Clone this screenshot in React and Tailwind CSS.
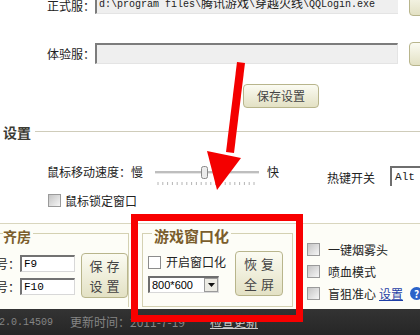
import React from 'react';

const Check = ({ flat }) => (
    <span
        className={`inline-block w-[13px] h-[13px] shrink-0 border ${flat ? 'border-[#8c8c8c] bg-white' : 'border-[#9a9a9a] bg-linear-to-br from-[#c4c4c4] to-[#f6f6f6]'}`}
    />
);

const CreamButton = ({ className, children }) => (
    <div
        className={`flex flex-col items-center justify-center shrink-0 rounded-[4px] border border-[#b8b58c] bg-linear-to-b from-[#fbfbf2] to-[#e3e1c4] text-[#444] ${className}`}
    >
        {children}
    </div>
);

const Slider = () => {
    const ticks = [];
    for (let i = 0; i < 21; i++) ticks.push(3 + i * 4.8);
    return (
        <svg width="104" height="22" className="shrink-0">
            <line x1="0" y1="8" x2="104" y2="8" stroke="#a9a9a9" strokeWidth="1.5" />
            <line x1="0" y1="9.5" x2="104" y2="9.5" stroke="#e6e6e6" strokeWidth="1" />
            <rect x="46.5" y="2.5" width="6" height="12" rx="2" fill="#ececec" stroke="#8a8a8a" />
            {ticks.map((x) => (
                <line key={x} x1={x} y1="18" x2={x} y2="21" stroke="#b4b4b4" strokeWidth="1" />
            ))}
        </svg>
    );
};

const App = () => {
    return (
        <div className="relative w-[420px] h-[335px] overflow-hidden bg-white text-[12px] text-[#222] font-['Noto_Sans_CJK_SC',sans-serif]">
            {/* path rows */}
            <div className="flex items-center h-[20px] -mt-[6px]">
                <span className="w-[95px] shrink-0 pl-[47px] leading-[16px] mt-[4px] whitespace-nowrap">正式服：</span>
                <div className="w-[303px] shrink-0 h-full flex items-end pb-[1px] pl-[2px] bg-[#efefef] border-l-2 border-l-[#7c7c7c] border-b border-b-[#e4e4e4] whitespace-nowrap overflow-hidden font-['Liberation_Mono','Noto_Sans_CJK_SC',monospace] leading-[14px]">
                    <span className="text-[10px]">d:\program files\</span>
                    <span className="text-[12px]">腾讯游戏</span>
                    <span className="text-[10px]">\</span>
                    <span className="text-[12px]">穿越火线</span>
                    <span className="text-[10px]">\QQLogin.exe</span>
                </div>
                <CreamButton className="ml-[11px] w-[30px] h-[26px] self-start -mt-[4px]" />
            </div>
            <div className="flex items-center h-[21px] mt-[29px]">
                <span className="w-[95px] shrink-0 pl-[47px] leading-[16px] whitespace-nowrap">体验服：</span>
                <div className="w-[303px] shrink-0 h-full bg-[#efefef] border-t-2 border-l-2 border-[#7c7c7c] border-b border-r border-r-[#e4e4e4] border-b-[#e4e4e4]" />
                <CreamButton className="ml-[11px] w-[30px] h-[24px]" />
            </div>
            <div className="flex h-[24px] mt-[20px] pl-[243px]">
                <CreamButton className="w-[76px] h-full text-[12px] text-[#333]">保存设置</CreamButton>
            </div>

            {/* settings header */}
            <div className="flex items-center h-[16px] mt-[16px]">
                <span className="ml-[3px] text-[14px] font-bold leading-[16px] text-[#3c3b33]">设置</span>
                <div className="flex-1 h-px ml-[4px] -mt-[2px] bg-[#cfccba]" />
            </div>

            {/* speed row */}
            <div className="flex h-[22px] mt-[24px]">
                <span className="ml-[47px] leading-[16px] whitespace-nowrap">鼠标移动速度：慢</span>
                <span className="ml-[12px]">
                    <Slider />
                </span>
                <span className="ml-[8px] leading-[16px]">快</span>
                <span className="ml-[48px] mt-[6px] leading-[16px] whitespace-nowrap">热键开关</span>
                <div className="ml-[15px] mt-[2px] w-[40px] h-[20px] shrink-0 pl-[3px] flex items-center bg-white border-t-2 border-l-2 border-[#6e6e6e] font-['Liberation_Mono',monospace] text-[11px]">
                    Alt
                </div>
            </div>

            {/* lock row */}
            <div className="flex items-center h-[13px] mt-[8px] pl-[48px]">
                <Check />
                <span className="ml-[4px] leading-[14px]">鼠标锁定窗口</span>
            </div>

            {/* lower panel */}
            <div className="flex items-start h-[86px] mt-[16px] border-t border-[#d9d6be] bg-[#fdfdf7]">
                {/* left group */}
                <div className="mt-[9px] w-[129px] h-[74px] shrink-0 border-t border-r border-[#d4d1b2]">
                    <div className="-mt-[6px] ml-[3px] w-fit pr-[2px] bg-[#fdfdf7] text-[14px] font-bold leading-[16px] text-[#7b5d2c]">齐房</div>
                    <div className="flex mt-[2px]">
                        <div className="flex flex-col -ml-[4px]">
                            <div className="flex items-center h-[17px] mt-[9px]">
                                <span className="leading-[14px]">号：</span>
                                <div className="w-[55px] h-full bg-white pl-[2px] flex items-center border-t-2 border-l-2 border-[#727272] border-r border-b border-r-[#d8d8d8] border-b-[#d8d8d8] font-['Liberation_Mono',monospace] text-[11px] text-black">
                                    F9
                                </div>
                            </div>
                            <div className="flex items-center h-[17px] mt-[6px]">
                                <span className="leading-[14px]">号：</span>
                                <div className="w-[55px] h-full bg-white pl-[2px] flex items-center border-t-2 border-l-2 border-[#727272] border-r border-b border-r-[#d8d8d8] border-b-[#d8d8d8] font-['Liberation_Mono',monospace] text-[11px] text-black">
                                    F10
                                </div>
                            </div>
                        </div>
                        <CreamButton className="ml-[6px] mt-[7px] w-[47px] h-[45px] text-[13px] leading-[20px] tracking-[4px] pl-[4px]">
                            <span>保存</span>
                            <span>设置</span>
                        </CreamButton>
                    </div>
                </div>

                {/* window group */}
                <div className="ml-[13px] mt-[9px] w-[151px] h-[74px] shrink-0 border border-[#d4d1b2]">
                    <div className="-mt-[6px] ml-[9px] w-fit px-[2px] bg-[#fdfdf7] text-[15px] font-bold leading-[16px] text-[#7b5d2c]">游戏窗口化</div>
                    <div className="flex mt-[7px]">
                        <div className="flex flex-col ml-[5px] w-[71px]">
                            <div className="flex items-center h-[12px] mt-[5px]">
                                <Check flat />
                                <span className="ml-[5px] leading-[14px] whitespace-nowrap">开启窗口化</span>
                            </div>
                            <div className="flex items-center h-[17px] mt-[8px] bg-white border-t-2 border-l-2 border-[#6e6e6e] border-r border-b border-r-[#d8d8d8] border-b-[#d8d8d8]">
                                <span className="flex-1 pl-[2px] text-[11px] font-['Liberation_Sans',sans-serif] text-black">800*600</span>
                                <span className="w-[14px] h-[14px] flex items-center justify-center bg-[#ecebe4] border border-[#9a9a9a]">
                                    <svg width="7" height="4">
                                        <polygon points="0,0 7,0 3.5,4" fill="#111" />
                                    </svg>
                                </span>
                            </div>
                        </div>
                        <CreamButton className="ml-[16px] w-[48px] h-[45px] text-[13px] leading-[20px] tracking-[4px] pl-[4px]">
                            <span>恢复</span>
                            <span>全屏</span>
                        </CreamButton>
                    </div>
                </div>

                {/* options */}
                <div className="ml-[14px] mt-[19px] shrink-0 flex flex-col gap-[9px] whitespace-nowrap">
                    <div className="flex items-center h-[13px]">
                        <Check />
                        <span className="ml-[8px] leading-[14px]">一键烟雾头</span>
                    </div>
                    <div className="flex items-center h-[13px]">
                        <Check />
                        <span className="ml-[8px] leading-[14px]">喷血模式</span>
                    </div>
                    <div className="flex items-center h-[13px]">
                        <Check />
                        <span className="ml-[8px] leading-[14px]">盲狙准心</span>
                        <span className="ml-[3px] leading-[14px] text-[#1f3fa6] underline">设置</span>
                        <span className="ml-[7px] w-[13px] h-[13px] shrink-0 rounded-full bg-[#2b63c9] text-white text-[10px] font-bold flex items-center justify-center">?</span>
                    </div>
                </div>
            </div>

            {/* status bar */}
            <div className="flex items-center h-[26px] bg-linear-to-b from-[#333] to-[#262626] text-[#858585] whitespace-nowrap">
                <span className="-ml-[1px] font-['Liberation_Mono',monospace] text-[10px]">2.0.14509</span>
                <span className="ml-[17px] leading-[14px]">更新时间：2011-7-19</span>
                <span className="ml-[25px] leading-[14px] text-[#cfcfcf] underline">检查更新</span>
            </div>

            {/* red annotation */}
            <div className="absolute left-[131px] top-[214px] w-[172px] h-[108px] border-[7px] border-[#f80000] pointer-events-none" />
            <svg className="absolute left-0 top-0 pointer-events-none" width="420" height="335">
                <polygon points="237,62 245,63 234,153 226,152" fill="#f40000" />
                <polygon points="207,151 241,158 217,190" fill="#f40000" />
            </svg>
        </div>
    );
};

export default App;
